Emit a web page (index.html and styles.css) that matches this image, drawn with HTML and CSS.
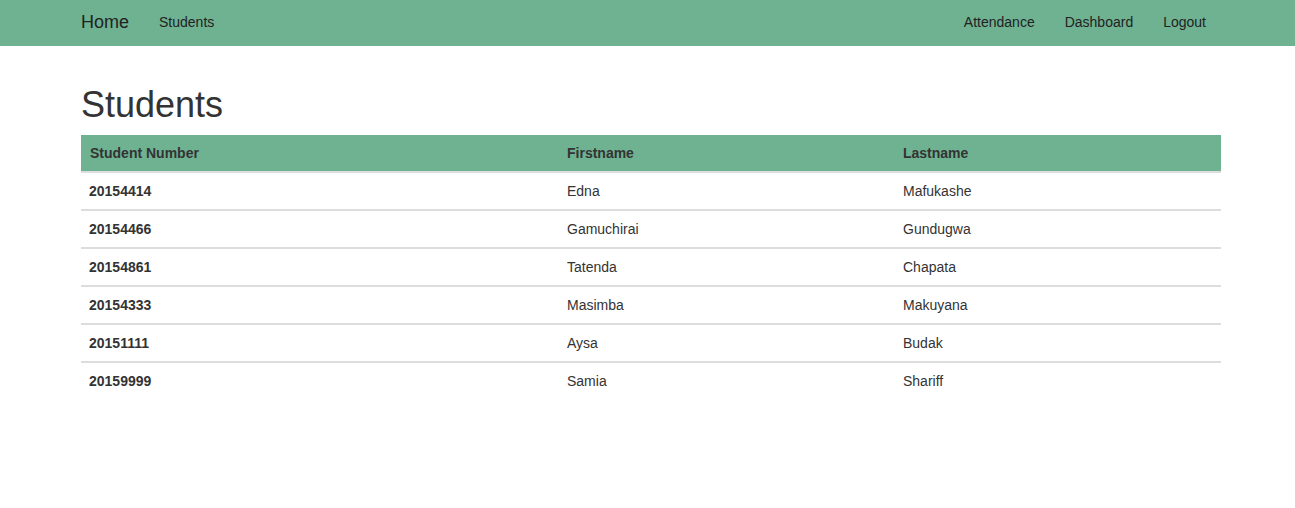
FILE: index.html
```html
<!DOCTYPE html>
<html lang="en">
<head>
<meta charset="utf-8">
<title>Students</title>
<link rel="stylesheet" href="styles.css">
</head>
<body>
<nav class="navbar">
  <div class="nav-inner">
    <div class="nav-left">
      <a class="brand" href="#">Home</a>
      <a class="nav-link" href="#">Students</a>
    </div>
    <div class="nav-right">
      <a class="nav-link" href="#">Attendance</a>
      <a class="nav-link" href="#">Dashboard</a>
      <a class="nav-link" href="#">Logout</a>
    </div>
  </div>
</nav>
<main class="container">
  <h1 class="title">Students</h1>
  <table class="students">
    <colgroup>
      <col class="c1"><col class="c2"><col class="c3">
    </colgroup>
    <thead>
      <tr><th class="first">Student Number</th><th>Firstname</th><th>Lastname</th></tr>
    </thead>
    <tbody>
      <tr><th>20154414</th><td>Edna</td><td>Mafukashe</td></tr>
      <tr><th>20154466</th><td>Gamuchirai</td><td>Gundugwa</td></tr>
      <tr><th>20154861</th><td>Tatenda</td><td>Chapata</td></tr>
      <tr><th>20154333</th><td>Masimba</td><td>Makuyana</td></tr>
      <tr><th>20151111</th><td>Aysa</td><td>Budak</td></tr>
      <tr><th>20159999</th><td>Samia</td><td>Shariff</td></tr>
    </tbody>
  </table>
</main>
</body>
</html>
```

FILE: styles.css
```css
* { box-sizing: border-box; }
html, body { margin: 0; padding: 0; }
body {
  font-family: "Liberation Sans", Arial, Helvetica, sans-serif;
  font-size: 14px;
  line-height: 20px;
  color: #333;
  background: #fff;
}
a { text-decoration: none; }

.navbar {
  background: #6eb292;
  height: 46px;
}
.nav-inner {
  width: 1140px;
  margin-left: 81px;
  height: 44px;
  display: flex;
  justify-content: space-between;
  align-items: center;
}
.nav-left, .nav-right {
  display: flex;
  align-items: center;
}
.brand {
  font-size: 18px;
  line-height: 20px;
  color: #222;
  padding-right: 15px;
}
.nav-link {
  color: #222;
  padding: 0 15px;
  font-size: 14px;
  line-height: 20px;
}

.container {
  width: 1140px;
  margin-left: 81px;
}
.title {
  font-family: "Liberation Sans", Arial, Helvetica, sans-serif;
  font-weight: 500;
  font-size: 36px;
  line-height: 40px;
  margin: 39px 0 10px;
  color: #333;
}
.students {
  width: 1140px;
  border-collapse: collapse;
  table-layout: fixed;
}
.c1 { width: 478px; }
.c2 { width: 336px; }
.c3 { width: 326px; }
.students thead th {
  background: #6eb292;
  text-align: left;
  font-weight: bold;
  padding: 8px;
  line-height: 20px;
  border-bottom: 2px solid #ddd;
}
.students thead th.first { padding-left: 9px; }
.students tbody th,
.students tbody td {
  text-align: left;
  padding: 8px;
  line-height: 20px;
  border-top: 2px solid #ddd;
}
.students tbody tr:first-child th,
.students tbody tr:first-child td { border-top: 0; }
.students tbody th { font-weight: bold; }
```
